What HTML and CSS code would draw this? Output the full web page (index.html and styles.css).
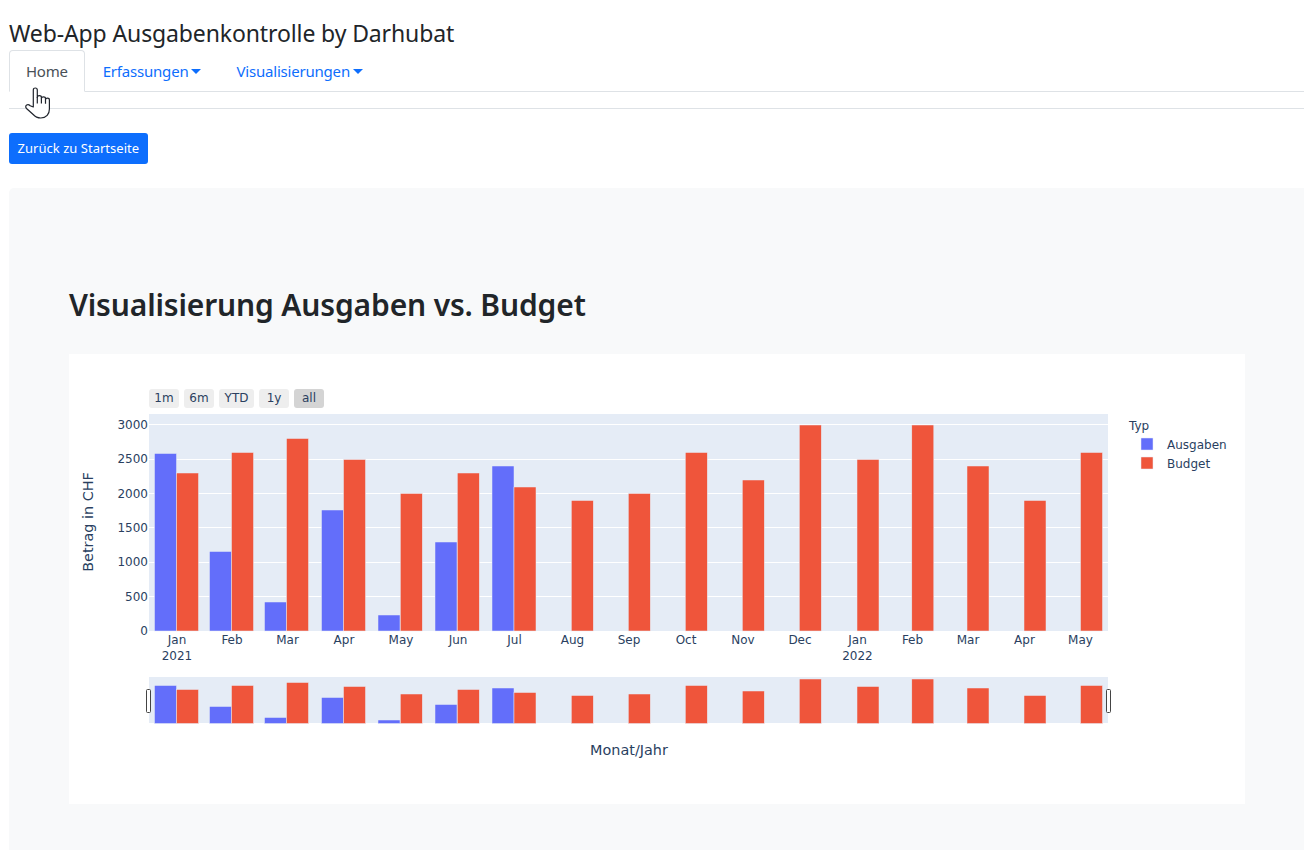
FILE: index.html
```html
<!DOCTYPE html>
<html lang="de">
<head>
<meta charset="utf-8">
<title>Web-App Ausgabenkontrolle</title>
<link rel="stylesheet" href="styles.css">
</head>
<body>
<header class="page-head">
  <div class="app-title">Web-App Ausgabenkontrolle by Darhubat</div>
  <nav class="tabs">
    <a class="tab tab-active">Home</a>
    <a class="tab">Erfassungen<span class="caret"></span></a>
    <a class="tab">Visualisierungen<span class="caret"></span></a>
  </nav>
</header>
<hr class="rule">
<a class="btn">Zurück zu Startseite</a>
<main class="panel">
  <h1 class="panel-title">Visualisierung Ausgaben vs. Budget</h1>
  <div class="chart-card">
    <svg class="chart" viewBox="69 354 1176 450" width="1176" height="450" xmlns="http://www.w3.org/2000/svg">
      <rect class="plot-bg" x="149" y="414" width="959" height="217"/>
      <g class="grid">
        <path d="M149 424.5H1108M149 459.5H1108M149 493.5H1108M149 527.5H1108M149 562.5H1108M149 596.5H1108"/>
      </g>
      <g class="bars blue">
        <rect x="154.5" y="453.5" width="22" height="177.5"/>
        <rect x="209.5" y="551.5" width="22" height="79.5"/>
        <rect x="264.5" y="602" width="22" height="29"/>
        <rect x="321.5" y="510" width="22" height="121"/>
        <rect x="378" y="615" width="22" height="16"/>
        <rect x="435" y="542" width="22" height="89"/>
        <rect x="492" y="466" width="22" height="165"/>
      </g>
      <g class="bars red">
        <rect x="176.5" y="473" width="22" height="158"/>
        <rect x="231.5" y="452.5" width="22" height="178.5"/>
        <rect x="286.5" y="438.5" width="22" height="192.5"/>
        <rect x="343.5" y="459.5" width="22" height="171.5"/>
        <rect x="400.3" y="493.5" width="22" height="137.5"/>
        <rect x="457.3" y="473" width="22" height="158"/>
        <rect x="514" y="487" width="22" height="144"/>
        <rect x="571.3" y="500.5" width="22" height="130.5"/>
        <rect x="628.3" y="493.5" width="22" height="137.5"/>
        <rect x="685.3" y="452.5" width="22" height="178.5"/>
        <rect x="742.3" y="480" width="22" height="151"/>
        <rect x="799.3" y="425" width="22" height="206"/>
        <rect x="857" y="459.5" width="22" height="171.5"/>
        <rect x="911.8" y="425" width="22" height="206"/>
        <rect x="967" y="466" width="22" height="165"/>
        <rect x="1024" y="500.5" width="22" height="130.5"/>
        <rect x="1080.5" y="452.5" width="22" height="178.5"/>
      </g>

      <g class="selector">
        <rect x="149" y="389" width="30" height="19" rx="3"/>
        <rect x="184" y="389" width="30" height="19" rx="3"/>
        <rect x="219" y="389" width="35" height="19" rx="3"/>
        <rect x="259" y="389" width="30" height="19" rx="3"/>
        <rect class="selector-on" x="294" y="389" width="30" height="19" rx="3"/>
      </g>
      <g class="label mid">
        <text x="164" y="402">1m</text>
        <text x="199" y="402">6m</text>
        <text x="236.500" y="402">YTD</text>
        <text x="274" y="402">1y</text>
        <text x="309" y="402">all</text>
      </g>

      <g class="label end">
        <text x="148" y="429">3000</text>
        <text x="148" y="463">2500</text>
        <text x="148" y="498">2000</text>
        <text x="148" y="532">1500</text>
        <text x="148" y="566">1000</text>
        <text x="148" y="601">500</text>
        <text x="148" y="635">0</text>
      </g>
      <g class="label mid">
        <text x="177" y="644">Jan</text><text x="177" y="660">2021</text>
        <text x="232" y="644">Feb</text>
        <text x="287.500" y="644">Mar</text>
        <text x="344" y="644">Apr</text>
        <text x="401" y="644">May</text>
        <text x="458" y="644">Jun</text>
        <text x="514.500" y="644">Jul</text>
        <text x="572.500" y="644">Aug</text>
        <text x="629" y="644">Sep</text>
        <text x="686" y="644">Oct</text>
        <text x="743" y="644">Nov</text>
        <text x="800" y="644">Dec</text>
        <text x="857.500" y="644">Jan</text><text x="857.500" y="660">2022</text>
        <text x="912.500" y="644">Feb</text>
        <text x="968" y="644">Mar</text>
        <text x="1024.500" y="644">Apr</text>
        <text x="1080.500" y="644">May</text>
      </g>
      <text class="axis-title mid" transform="translate(93 522) rotate(-90)">Betrag in CHF</text>
      <text class="axis-title mid" x="629" y="755">Monat/Jahr</text>

      <rect class="plot-bg" x="149" y="677" width="959" height="46"/>
      <g class="bars blue">
        <rect x="154.500" y="685.500" width="22" height="38"/>
        <rect x="209.500" y="706.500" width="22" height="17"/>
        <rect x="264.500" y="717.500" width="22" height="6"/>
        <rect x="321.500" y="697.500" width="22" height="26"/>
        <rect x="378" y="720" width="22" height="3.500"/>
        <rect x="435" y="704.500" width="22" height="19"/>
        <rect x="492" y="688" width="22" height="35.500"/>
      </g>
      <g class="bars red">
        <rect x="176.500" y="689.500" width="22" height="34"/>
        <rect x="231.500" y="685.500" width="22" height="38"/>
        <rect x="286.500" y="682.500" width="22" height="41"/>
        <rect x="343.500" y="686.500" width="22" height="37"/>
        <rect x="400.300" y="694" width="22" height="29.500"/>
        <rect x="457.300" y="689.500" width="22" height="34"/>
        <rect x="514" y="692.500" width="22" height="31"/>
        <rect x="571.300" y="695.500" width="22" height="28"/>
        <rect x="628.300" y="694" width="22" height="29.500"/>
        <rect x="685.300" y="685.500" width="22" height="38"/>
        <rect x="742.300" y="691" width="22" height="32.500"/>
        <rect x="799.300" y="679" width="22" height="44.500"/>
        <rect x="857" y="686.500" width="22" height="37"/>
        <rect x="911.800" y="679" width="22" height="44.500"/>
        <rect x="967" y="688" width="22" height="35.500"/>
        <rect x="1024" y="695.500" width="22" height="28"/>
        <rect x="1080.500" y="685.500" width="22" height="38"/>
      </g>
      <g class="handles">
        <rect x="146.500" y="689.500" width="4" height="23" rx="1"/>
        <rect x="1106.500" y="689.500" width="4" height="23" rx="1"/>
      </g>

      <text class="label" x="1129" y="430">Typ</text>
      <rect class="bars blue swatch" x="1141" y="438" width="12" height="12"/>
      <rect class="bars red swatch" x="1141" y="457" width="12" height="12"/>
      <text class="label" x="1167" y="449">Ausgaben</text>
      <text class="label" x="1167" y="468">Budget</text>
    </svg>
  </div>
</main>
<svg class="cursor" viewBox="0 0 28 34" width="28" height="34" xmlns="http://www.w3.org/2000/svg">
  <path d="M8.300 20V3C8.300 1.500 9.200 1 10.300 1S12.300 1.500 12.300 3V10.500c0-1.200 .9-1.800 2-1.800s2.100 .6 2.100 1.800v1c0-1 .9-1.600 2-1.600s2.100 .6 2.100 1.600v1.200c0-1 .9-1.500 1.900-1.500 1.100 0 2 .6 2 1.800V22c0 5-3 9-8.700 9-3.500 0-5.500-1.200-7.500-3.500L1.500 21.500C.3 20.200 .6 18.600 1.700 18c1.100-.6 2.500-.2 3.500 .7Z"/>
  <path d="M12.300 10v6.500M16.400 11.500v5M20.500 12.700v4"/>
</svg>
</body>
</html>
```
FILE: styles.css
```css
html, body {
  margin: 0;
  height: 100%;
  overflow: hidden;
}
body {
  background: #fff;
  color: #212529;
  font-family: "Noto Sans", "Open Sans", sans-serif;
  font-size: 15px;
  padding: 0 0 0 9px;
  position: relative;
}
.page-head {
  padding-top: 16px;
}
.app-title {
  font-size: 23px;
  letter-spacing: -.12px;
  line-height: 34px;
  height: 34px;
}
.tabs {
  display: flex;
  height: 42px;
  box-sizing: border-box;
  border-bottom: 1px solid #dee2e6;
}
.tab {
  display: block;
  height: 42px;
  box-sizing: border-box;
  padding: 8px 16px 8px 17px;
  line-height: 24px;
  letter-spacing: -.2px;
  color: #0d6efd;
  border: 1px solid transparent;
  border-radius: 4px 4px 0 0;
}
.tab-active {
  padding: 8px 16px;
  letter-spacing: -.25px;
  color: #495057;
  background: #fff;
  border-color: #dee2e6 #dee2e6 #fff;
}
.caret {
  display: inline-block;
  margin-left: 3px;
  vertical-align: 3px;
  border-top: 5px solid currentColor;
  border-left: 5px solid transparent;
  border-right: 5px solid transparent;
}
.rule {
  margin: 16px 0 24px;
  border: 0;
  border-top: 1px solid #dee2e6;
}
.btn {
  display: inline-block;
  box-sizing: border-box;
  height: 31px;
  padding: 0 8.5px;
  line-height: 31px;
  font-size: 13px;
  letter-spacing: .03px;
  color: #fff;
  background: #0d6efd;
  border-radius: 3px;
}
.panel {
  margin-top: 24px;
  height: 700px;
  padding: 92px 60px 0;
  background: #f8f9fa;
  border-radius: 5px 0 0 0;
}
.panel-title {
  margin: 0 0 24px;
  font-size: 30px;
  letter-spacing: -.15px;
  line-height: 50px;
  font-weight: 600;
}
.chart-card {
  width: 1176px;
  height: 450px;
  background: #fff;
}
.chart {
  display: block;
}
.plot-bg { fill: #e5ecf6; }
.grid path { fill: none; stroke: #fff; stroke-width: 1; }
.bars rect, .swatch { stroke: #e5ecf6; stroke-width: .5; }
.blue rect, .swatch.blue { fill: #636efa; }
.red rect, .swatch.red { fill: #ef553b; }
.selector rect { fill: #eee; }
.selector .selector-on { fill: #d4d4d4; }
.label {
  font-family: "DejaVu Sans", sans-serif;
  font-size: 12px;
  fill: #2a3f5f;
}
.axis-title {
  font-family: "DejaVu Sans", sans-serif;
  font-size: 14.4px;
  fill: #2a3f5f;
}
.label.end, .end text { text-anchor: end; }
.mid, .mid text { text-anchor: middle; }
.handles rect { fill: #fff; stroke: #444; stroke-width: 1; }
.cursor {
  position: absolute;
  left: 25px;
  top: 87px;
}
.cursor path {
  fill: #fff;
  stroke: #20242c;
  stroke-width: 1.200;
  stroke-linejoin: round;
}
```
